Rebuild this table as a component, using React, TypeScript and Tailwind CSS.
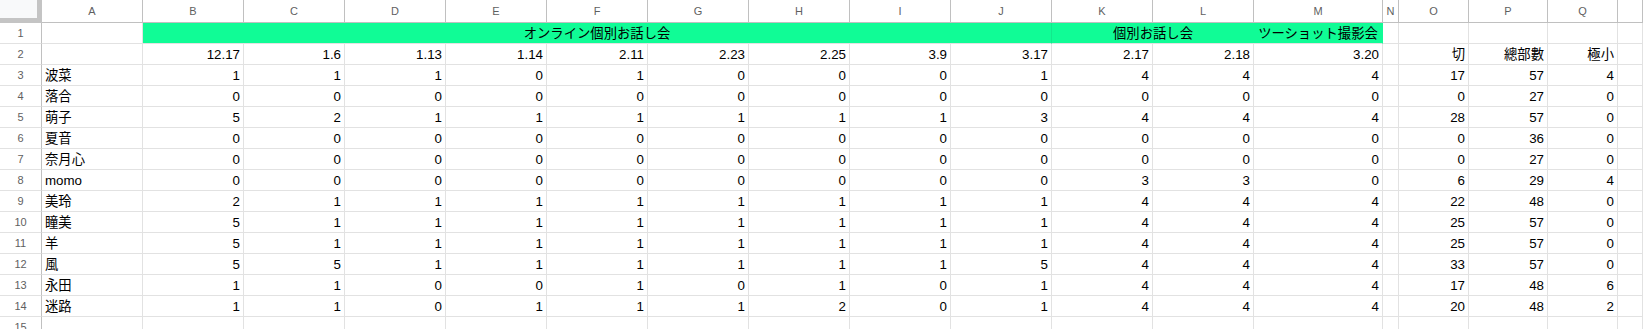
import React from "react";

const cols = ["A","B","C","D","E","F","G","H","I","J","K","L","M","N","O","P","Q",""];
const dates = ["12.17","1.6","1.13","1.14","2.11","2.23","2.25","3.9","3.17","2.17","2.18","3.20"];

const rows: [string, number[], number[]][] = [
  ["波菜", [1,1,1,0,1,0,0,0,1,4,4,4], [17,57,4]],
  ["落合", [0,0,0,0,0,0,0,0,0,0,0,0], [0,27,0]],
  ["萌子", [5,2,1,1,1,1,1,1,3,4,4,4], [28,57,0]],
  ["夏音", [0,0,0,0,0,0,0,0,0,0,0,0], [0,36,0]],
  ["奈月心", [0,0,0,0,0,0,0,0,0,0,0,0], [0,27,0]],
  ["momo", [0,0,0,0,0,0,0,0,0,3,3,0], [6,29,4]],
  ["美玲", [2,1,1,1,1,1,1,1,1,4,4,4], [22,48,0]],
  ["瞳美", [5,1,1,1,1,1,1,1,1,4,4,4], [25,57,0]],
  ["羊", [5,1,1,1,1,1,1,1,1,4,4,4], [25,57,0]],
  ["風", [5,5,1,1,1,1,1,1,5,4,4,4], [33,57,0]],
  ["永田", [1,1,0,0,1,0,1,0,1,4,4,4], [17,48,6]],
  ["迷路", [1,1,0,1,1,1,2,0,1,4,4,4], [20,48,2]],
];

const cellBase =
  "border-r border-b border-[#e2e2e2] flex items-end pb-[2px] px-[3px] leading-[15px] text-[13.33px] text-black whitespace-nowrap overflow-visible";

function Cell({ children, right = false, className = "" }: { children?: React.ReactNode; right?: boolean; className?: string }) {
  return <div className={`${cellBase} ${right ? "justify-end" : "justify-start"} ${className}`}>{children}</div>;
}

function RowHead({ n }: { n: number }) {
  return (
    <div className="border-r border-b border-r-[#c0c0c0] border-b-[#e2e2e2] flex items-center justify-center text-[11px] text-[#5f5f5f]">
      {n}
    </div>
  );
}

export default function App() {
  return (
    <div
      className="w-[1643px] h-[329px] overflow-hidden bg-white"
      style={{ fontFamily: '"Liberation Sans", Arial, "Noto Sans CJK JP", sans-serif' }}
    >
      <div className="grid grid-cols-[42px_repeat(12,101px)_129px_16px_70px_79px_70px_25px] grid-rows-[23px_repeat(15,21px)]">
        {/* header row */}
        <div className="bg-[#f8f9fa] border-r-[5px] border-b-[5px] border-[#c4c4c4]" />
        {cols.map((c, i) => (
          <div
            key={i}
            className="border-r border-b border-[#c0c0c0] bg-white flex items-center justify-center text-[11px] text-[#5f5f5f]"
          >
            {c}
          </div>
        ))}

        {/* row 1 */}
        <RowHead n={1} />
        <Cell />
        <div className="col-span-9 bg-[#10fc96] border-r border-b border-r-[#12e88c] border-b-[#e2e2e2] flex items-end justify-center pb-[2px] leading-[15px] text-[13.33px] text-black whitespace-nowrap">
          オンライン個別お話し会
        </div>
        <div className="col-span-2 bg-[#10fc96] border-b border-b-[#e2e2e2] flex items-end justify-center pb-[2px] leading-[15px] text-[13.33px] text-black whitespace-nowrap">
          個別お話し会
        </div>
        <div className="bg-[#10fc96] border-r border-b border-r-[#10fc96] border-b-[#e2e2e2] flex items-end justify-center pb-[2px] leading-[15px] text-[13.33px] text-black whitespace-nowrap">
          ツーショット撮影会
        </div>
        <Cell />
        <Cell />
        <Cell />
        <Cell />
        <Cell />

        {/* row 2 */}
        <RowHead n={2} />
        <Cell />
        {dates.map((d, i) => (
          <Cell key={i} right>
            {d}
          </Cell>
        ))}
        <Cell />
        <Cell right>切</Cell>
        <Cell right>總部數</Cell>
        <Cell right>極小</Cell>
        <Cell />

        {/* data rows */}
        {rows.map(([name, vals, tail], r) => (
          <React.Fragment key={r}>
            <RowHead n={r + 3} />
            <Cell>{name}</Cell>
            {vals.map((v, i) => (
              <Cell key={i} right>
                {v}
              </Cell>
            ))}
            <Cell />
            {tail.map((v, i) => (
              <Cell key={i} right>
                {v}
              </Cell>
            ))}
            <Cell />
          </React.Fragment>
        ))}

        {/* row 15 */}
        <RowHead n={15} />
        {cols.map((_, i) => (
          <Cell key={i} />
        ))}
      </div>
    </div>
  );
}
